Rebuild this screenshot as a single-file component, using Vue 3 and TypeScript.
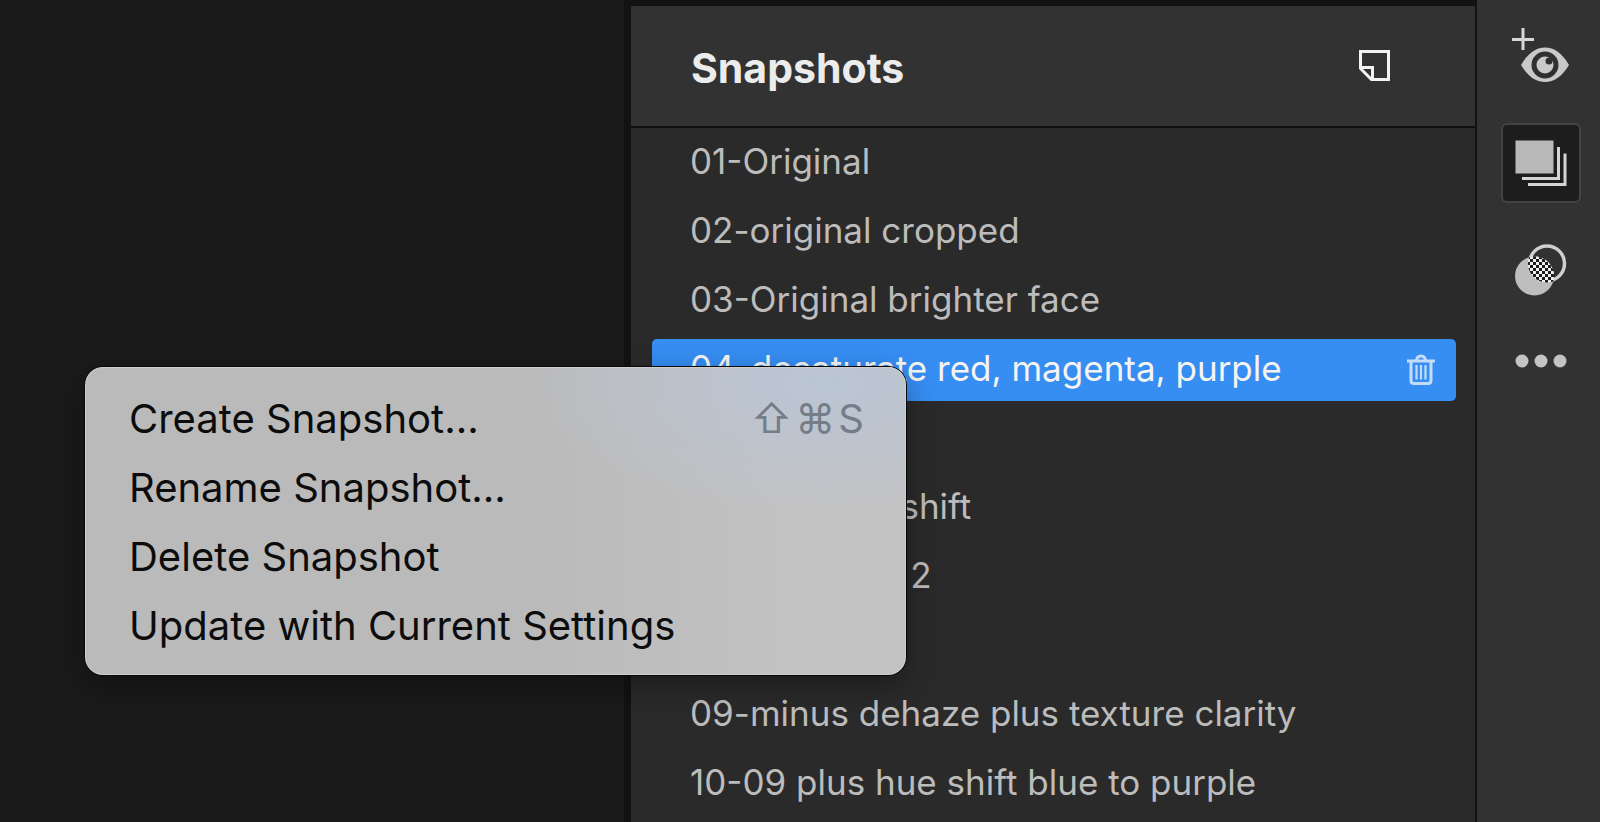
<script setup lang="ts">
import { ref } from 'vue'

interface Snapshot {
  id: number
  name: string
}

interface MenuEntry {
  label: string
  keys?: string[]
}

const snapshots: Snapshot[] = [
  { id: 1, name: '01-Original' },
  { id: 2, name: '02-original cropped' },
  { id: 3, name: '03-Original brighter face' },
  { id: 4, name: '04-desaturate red, magenta, purple' },
  { id: 5, name: '05' },
  { id: 6, name: '06-plus hue shift' },
  { id: 7, name: '07-Blue shift 2' },
  { id: 8, name: '08' },
  { id: 9, name: '09-minus dehaze plus texture clarity' },
  { id: 10, name: '10-09 plus hue shift blue to purple' },
]

const menu: MenuEntry[] = [
  { label: 'Create Snapshot...', keys: ['⇧', '⌘', 'S'] },
  { label: 'Rename Snapshot...' },
  { label: 'Delete Snapshot' },
  { label: 'Update with Current Settings' },
]

const selected = ref(4)
</script>

<template>
  <div class="app">
    <main class="canvas"></main>

    <section class="panel" aria-labelledby="panel-title">
      <header class="panel-head">
        <h1 id="panel-title">Snapshots</h1>
        <button class="icon-btn" type="button" aria-label="Create snapshot">
          <svg width="34" height="34" viewBox="0 0 34 34" fill="none" stroke="#f2f2f2" stroke-width="3">
            <path d="M2.500 2.500H30.500V30.500H13.500L2.500 19.500Z" />
            <path d="M2.500 18.500H14.500V30.500" />
          </svg>
        </button>
      </header>
      <ul class="list">
        <li v-for="s in snapshots" :key="s.id" class="row" :class="{ active: s.id === selected }">
          <button class="name" type="button" @click="selected = s.id">{{ s.name }}</button>
          <button v-if="s.id === selected" class="icon-btn" type="button" aria-label="Delete snapshot">
            <svg width="28" height="32" viewBox="0 0 28 32" fill="none" stroke="#c3dcfb" stroke-width="3">
              <path d="M0 7H28M9.500 7C9.500 3.500 11 2 14 2S18.500 3.500 18.500 7" />
              <path d="M4 7V26.500Q4 29.500 7 29.500H21Q24 29.500 24 26.500V7" />
              <path d="M9.500 11V25.500M14 11V25.500M18.500 11V25.500" stroke-width="2.200" />
            </svg>
          </button>
        </li>
      </ul>
    </section>

    <nav class="rail" aria-label="Tools">
      <button class="tool" type="button" aria-label="Show preview">
        <svg width="58" height="56" viewBox="0 0 58 56">
          <path d="M0 11.500H22M11 0V22" stroke="#d6d6d6" stroke-width="3" />
          <path d="M9 37C16 25 24 19.500 33 19.500S50 25 57 37C50 48.500 42 54 33 54S16 48.500 9 37Z" fill="#c9c9c9" />
          <circle cx="33" cy="37" r="11" fill="#c9c9c9" stroke="#303030" stroke-width="5" />
          <circle cx="37" cy="33" r="3.500" fill="#303030" />
          <path d="M37 33L42 28" stroke="#303030" stroke-width="4" />
        </svg>
      </button>
      <button class="tool current" type="button" aria-label="Snapshots">
        <svg width="52" height="46" viewBox="0 0 52 46">
          <rect x="0.500" y="0.500" width="38" height="33" fill="#b9b9b9" />
          <path d="M43.500 7V38.500H7M50 13.500V44.500H13" fill="none" stroke="#d4d4d4" stroke-width="3" />
        </svg>
      </button>
      <button class="tool" type="button" aria-label="Presets">
        <svg width="52" height="52" viewBox="0 0 52 52">
          <defs>
            <pattern id="checker" width="6" height="6" patternUnits="userSpaceOnUse">
              <rect width="6" height="6" fill="#f0f0f0" />
              <rect width="3" height="3" fill="#1c1c1c" />
              <rect x="3" y="3" width="3" height="3" fill="#1c1c1c" />
            </pattern>
            <clipPath id="overlap"><circle cx="32" cy="19.500" r="19" /></clipPath>
          </defs>
          <circle cx="32" cy="19.500" r="17.500" fill="none" stroke="#d0d0d0" stroke-width="3.500" />
          <circle cx="19.500" cy="32" r="19.500" fill="#bdbdbd" />
          <circle cx="19.500" cy="32" r="19.500" fill="url(#checker)" clip-path="url(#overlap)" />
        </svg>
      </button>
      <button class="tool dots" type="button" aria-label="More">
        <svg width="52" height="14" viewBox="0 0 52 14" fill="#c4c4c4">
          <circle cx="7" cy="7" r="6.500" />
          <circle cx="26" cy="7" r="6.500" />
          <circle cx="45" cy="7" r="6.500" />
        </svg>
      </button>
    </nav>

    <ul class="menu" role="menu">
      <li v-for="m in menu" :key="m.label" role="none">
        <button type="button" role="menuitem">
          <span>{{ m.label }}</span>
          <span v-if="m.keys" class="keys">
            <kbd v-for="k in m.keys" :key="k">{{ k }}</kbd>
          </span>
        </button>
      </li>
    </ul>
  </div>
</template>

<style>
body {
  background: #1a1a1a;
}
</style>

<style scoped>
.app {
  position: relative;
  display: grid;
  grid-template-columns: 624fr 853fr 123fr;
  min-height: 100vh;
  background: #1a1a1a;
  font-family: Inter, "Liberation Sans", sans-serif;
}

button {
  margin: 0;
  padding: 0;
  border: 0;
  background: none;
  color: inherit;
  font: inherit;
  text-align: left;
}

svg {
  display: block;
}

ul {
  margin: 0;
  padding: 0;
  list-style: none;
}

.panel {
  border: solid #121212;
  border-width: 6px 2px 0 7px;
  background: #2a2a2a;
  color: #bcbcbc;
}

.panel-head {
  display: flex;
  align-items: center;
  justify-content: space-between;
  height: 122px;
  padding: 0 83px 0 60px;
  box-sizing: border-box;
  border-bottom: 2px solid #101010;
  background: #323232;
}

h1 {
  margin: 0;
  padding-top: 4px;
  color: #ececec;
  font-size: 41px;
  font-weight: 700;
  line-height: 48px;
}

.list {
  display: flex;
  flex-direction: column;
  gap: 7px;
  padding: 4px 19px 8px 21px;
}

.row {
  display: flex;
  align-items: center;
  height: 62px;
  padding: 0 21px 0 38px;
  border-radius: 5px;
  font-size: 35px;
  line-height: 58px;
}

.name {
  flex: 1;
  height: 62px;
  padding-bottom: 4px;
  white-space: nowrap;
}

.active {
  background: #368df2;
  color: #f6f4f0;
}

.rail {
  display: flex;
  flex-direction: column;
  align-items: center;
  padding: 16px 0 0 4px;
  background: #323232;
}

.tool {
  display: grid;
  place-items: center;
  width: 80px;
  height: 80px;
  box-sizing: border-box;
  margin-bottom: 27px;
  border: 2px solid transparent;
  border-radius: 6px;
}

.tool.current {
  border-color: #434343;
  background: #1d1d1d;
}

.tool.dots {
  margin-top: -16px;
}

.menu {
  position: absolute;
  top: 367px;
  left: 85px;
  width: 821px;
  box-sizing: border-box;
  padding: 17px 42px 15px 44px;
  border-radius: 18px;
  background:
    radial-gradient(ellipse 300px 130px at 90% 5%, #bac5d5 0%, #bac5d500 100%),
    linear-gradient(90deg, #bababa 55%, #c2c2c3 85%);
  box-shadow: 0 0 0 1px #080808, inset 0 0 0 1px #cfcfcf, 0 10px 30px #00000059;
  color: #0c0c0c;
  font-size: 40px;
  line-height: 69px;
}

.menu button {
  display: flex;
  justify-content: space-between;
  width: 100%;
  height: 69px;
}

.keys {
  display: flex;
  gap: 3px;
  color: #757d88;
}

kbd {
  font-family: inherit;
}
</style>
